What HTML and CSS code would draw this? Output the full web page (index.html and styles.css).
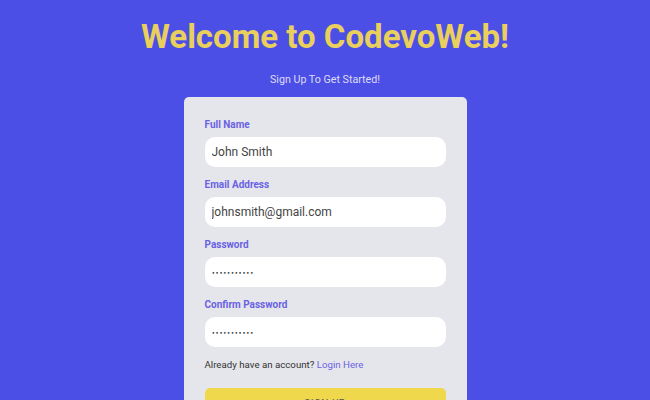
FILE: index.html
```html
<!DOCTYPE html>
<html lang="en">
<head>
<meta charset="utf-8">
<title>Sign Up</title>
<link rel="stylesheet" href="styles.css">
</head>
<body>
<main class="page">
  <h1 class="title">Welcome to CodevoWeb!</h1>
  <p class="subtitle">Sign Up To Get Started!</p>
  <form class="card">
    <div class="field">
      <label class="label" for="name">Full Name</label>
      <input class="input" id="name" type="text" value="John Smith">
    </div>
    <div class="field">
      <label class="label" for="email">Email Address</label>
      <input class="input" id="email" type="text" value="johnsmith@gmail.com">
    </div>
    <div class="field">
      <label class="label" for="pw">Password</label>
      <input class="input input-pw" id="pw" type="password" value="12345678901">
    </div>
    <div class="field">
      <label class="label" for="pw2">Confirm Password</label>
      <input class="input input-pw" id="pw2" type="password" value="12345678901">
    </div>
    <p class="login">Already have an account? <a class="login-link" href="#">Login Here</a></p>
    <button class="btn" type="button">SIGN UP</button>
  </form>
</main>
</body>
</html>
```

FILE: styles.css
```css
html, body {
  margin: 0;
  padding: 0;
  height: 100%;
  overflow: hidden;
}
body {
  background: #4c4fe5;
  font-family: Roboto, "Liberation Sans", sans-serif;
}
.page {
  display: flex;
  flex-direction: column;
  align-items: center;
  padding-top: 17px;
}
.title {
  margin: 0;
  font-size: 33px;
  font-weight: 700;
  line-height: normal;
  color: #e9d05c;
}
.subtitle {
  margin: 17px 0 0;
  font-size: 10.7px;
  line-height: 13px;
  color: #dcdcf6;
}
.card {
  margin-top: 11px;
  width: 241px;
  padding: 22px 21px 20px;
  background: #e5e6eb;
  border-radius: 5px;
  display: flex;
  flex-direction: column;
}
.field {
  display: flex;
  flex-direction: column;
  margin-bottom: 12px;
}
.label {
  font-size: 10px;
  font-weight: 700;
  line-height: 12px;
  color: #6a62e4;
  margin-bottom: 6px;
}
.input {
  box-sizing: border-box;
  height: 30px;
  width: 100%;
  border: none;
  outline: none;
  border-radius: 10px;
  background: #ffffff;
  padding: 0 7px;
  font-family: Roboto, "Liberation Sans", sans-serif;
  font-size: 12px;
  color: #444444;
}
.input-pw {
  font-family: "DejaVu Sans", sans-serif;
  font-size: 6px;
  letter-spacing: 0.3px;
  color: #333333;
}
.login {
  margin: 0;
  font-size: 9.7px;
  line-height: 12px;
  color: #333333;
}
.login-link {
  color: #6a62e4;
  text-decoration: none;
}
.btn {
  margin-top: 17px;
  height: 30px;
  border: none;
  border-radius: 5px;
  background: #efd84c;
  color: #555555;
  font-family: Roboto, "Liberation Sans", sans-serif;
  font-size: 10px;
  letter-spacing: 0.5px;
}
```
